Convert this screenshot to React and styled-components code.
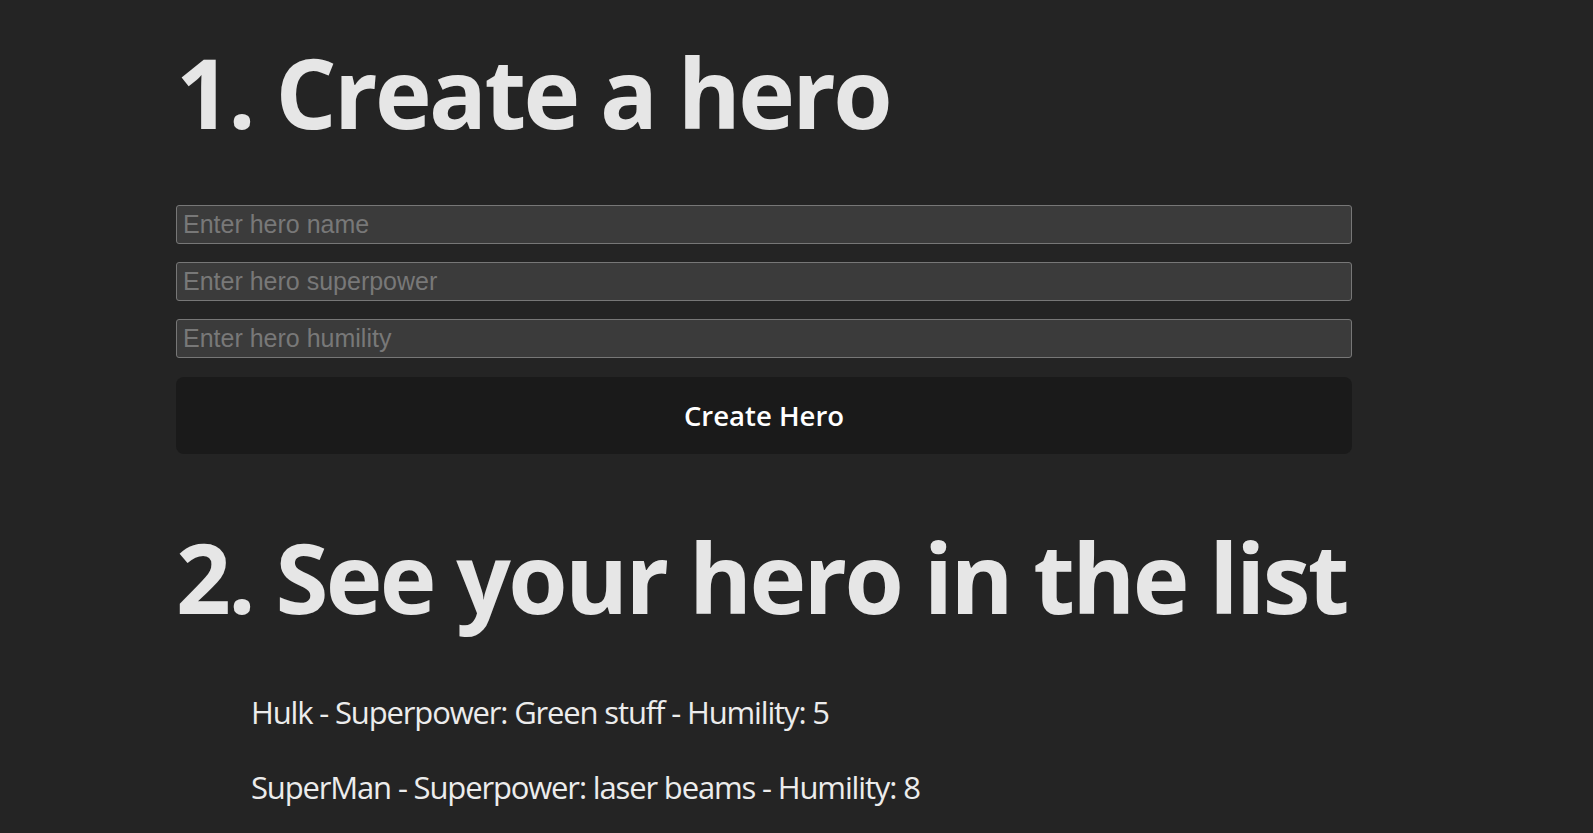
import React from "react";
import styled, { createGlobalStyle } from "styled-components";

const GlobalStyle = createGlobalStyle`
  html, body {
    margin: 0;
    padding: 0;
    background: #242424;
  }
  body {
    font-family: "Open Sans", "Noto Sans", sans-serif;
    color: rgba(255, 255, 255, 0.87);
    min-height: 100vh;
  }
`;

const Page = styled.main`
  width: 1176px;
  margin-left: 176px;
  padding-top: 34px;
  display: flex;
  flex-direction: column;
`;

const Heading = styled.h1`
  margin: 0;
  font-size: 96px;
  line-height: 115px;
  font-weight: 700;
  letter-spacing: -2.6px;
  color: #e6e6e6;
  white-space: nowrap;
`;

const Form = styled.form`
  display: flex;
  flex-direction: column;
  gap: 18px;
  margin: 56px 0 65px;
`;

const Input = styled.input`
  box-sizing: border-box;
  height: 39px;
  width: 100%;
  padding: 0 6px;
  border: 1px solid #777777;
  border-radius: 3px;
  background: #3b3b3b;
  color: #e6e6e6;
  font-family: "Liberation Sans", Arial, sans-serif;
  font-size: 25px;
  outline: none;
  &::placeholder {
    color: #787878;
  }
`;

const Button = styled.button`
  height: 77px;
  margin-top: 1px;
  border: 1px solid transparent;
  border-radius: 8px;
  background: #1a1a1a;
  color: #ffffff;
  font-family: "Open Sans", "Noto Sans", sans-serif;
  font-size: 27.5px;
  font-weight: 600;
  cursor: pointer;
`;

const HeroList = styled.ul`
  list-style: none;
  margin: 56px 0 0;
  padding: 0 0 0 75px;
  display: flex;
  flex-direction: column;
  gap: 31px;
`;

const HeroItem = styled.li`
  font-size: 31px;
  line-height: 44px;
  letter-spacing: -1.15px;
  color: #ececec;
`;

const heroes = [
  { name: "Hulk", superpower: "Green stuff", humility: 5 },
  { name: "SuperMan", superpower: "laser beams", humility: 8 },
];

export default function App() {
  return (
    <>
      <GlobalStyle />
      <Page>
        <Heading>1. Create a hero</Heading>
        <Form onSubmit={(e) => e.preventDefault()}>
          <Input placeholder="Enter hero name" />
          <Input placeholder="Enter hero superpower" />
          <Input placeholder="Enter hero humility" />
          <Button type="submit">Create Hero</Button>
        </Form>
        <Heading as="h2">2. See your hero in the list</Heading>
        <HeroList>
          {heroes.map((hero) => (
            <HeroItem key={hero.name}>
              {hero.name} - Superpower: {hero.superpower} - Humility:{" "}
              {hero.humility}
            </HeroItem>
          ))}
        </HeroList>
      </Page>
    </>
  );
}
